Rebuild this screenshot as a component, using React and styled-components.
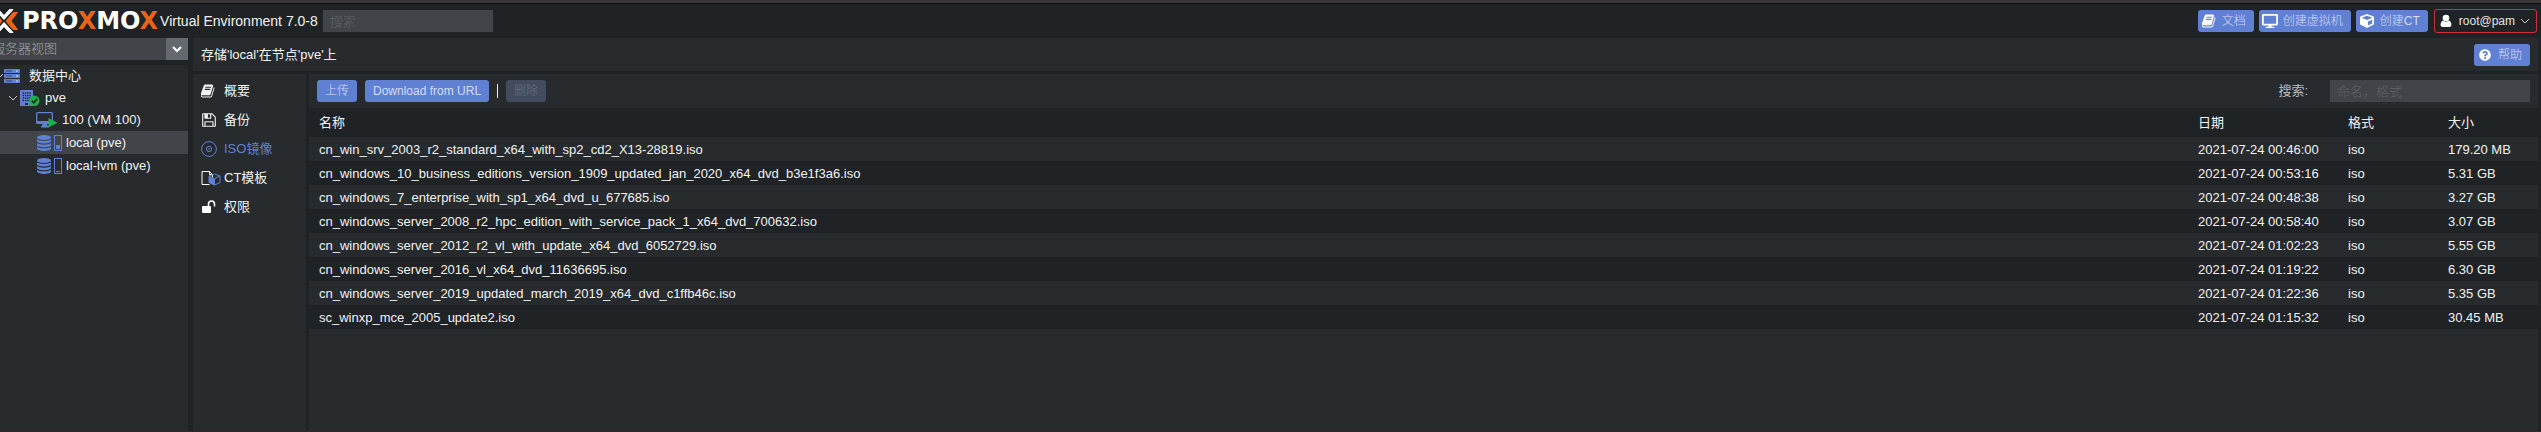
import React from "react";
import styled, { createGlobalStyle } from "styled-components";
import { FaDesktop, FaCube, FaQuestionCircle } from "react-icons/fa";

const color = {
  base: "#1f2326",
  panel: "#272b2e",
  field: "#414448",
  trigger: "#646970",
  accent: "#6081d3",
  text: "#f2f2f2",
  orange: "#e8641b",
  green: "#1cb14a",
};

const GlobalStyle = createGlobalStyle`
  * { box-sizing: border-box; }
  body {
    margin: 0;
    background: ${color.base};
    color: ${color.text};
    font: 13px/18px "Liberation Sans", "Noto Sans CJK SC", sans-serif;
  }
  button, input, select { font: inherit; font-weight: 300; }
`;

const Viewport = styled.div`
  min-height: 100vh;
  display: flex;
  overflow: hidden;
  border-top: 3px solid #3a3638;
  border-bottom: 1px solid #33272b;
`;

/* The workspace is scrolled 8px past the left edge of the window. */
const Shell = styled.div`
  flex: 1;
  min-width: 0;
  margin-left: -8px;
  display: flex;
  flex-direction: column;
  border-top: 1px solid #0c0e0f;
`;

const Header = styled.header`
  height: 34px;
  display: flex;
  align-items: center;
  padding: 0 4px 0 6px;
  white-space: nowrap;
`;

const Brand = styled.a`
  display: flex;
  align-items: center;
  gap: 3px;
  margin-right: 2px;
  color: #fff;
  text-decoration: none;
  font: bold 24px/26px "DejaVu Sans", sans-serif;
`;

const BrandX = styled.span`
  color: ${color.orange};
`;

const Version = styled.span`
  font-size: 14px;
  margin-right: 5px;
`;

const TextField = styled.input`
  width: ${(p) => p.$width}px;
  height: 22px;
  padding: 0 7px;
  border: 0;
  outline: 0;
  background: ${color.field};
  color: ${color.text};
  &::placeholder { color: #606367; opacity: 1; }
`;

const Spacer = styled.div`
  flex: 1;
`;

const Actions = styled.div`
  display: flex;
  align-items: center;
  gap: 5px;
`;

const Button = styled.button`
  height: 22px;
  display: flex;
  align-items: center;
  padding: 0 8px 0 ${(p) => (p.$icon ? 3 : 8)}px;
  border: 0;
  border-radius: 3px;
  background: ${color.accent};
  color: #d3dcf3;
  font-size: 12px;
  white-space: nowrap;
  &:disabled { background: #434c5f; color: #697080; }
`;

const ButtonIcon = styled.span`
  width: 16px;
  margin-right: 5px;
  display: grid;
  place-items: center;
  color: #fff;
`;

const UserButton = styled(Button)`
  height: 24px;
  margin-left: 1px;
  padding-right: 6px;
  border: 1px solid #cf2f3a;
  background: transparent;
  color: #e4e4e4;
`;

const UserName = styled.span`
  margin-right: 5px;
`;

const Body = styled.div`
  flex: 1;
  display: flex;
  gap: 5px;
  padding-right: 3px;
`;

const Sidebar = styled.aside`
  width: 196px;
  display: flex;
  flex-direction: column;
  gap: 5px;
`;

const ViewPicker = styled.label`
  display: flex;
  height: 22px;
  background: ${color.field};
`;

const ViewSelect = styled.select`
  flex: 1;
  appearance: none;
  border: 0;
  outline: 0;
  padding: 0;
  background: transparent;
  color: #a4a6a8;
`;

const PickerArrow = styled.span`
  width: 22px;
  display: grid;
  place-items: center;
  background: ${color.trigger};
`;

const Tree = styled.ul`
  flex: 1;
  margin: 0;
  padding: 0;
  list-style: none;
  background: ${color.panel};
`;

const TreeRow = styled.li`
  height: ${(p) => (p.$tall ? 23 : 22)}px;
  display: flex;
  align-items: center;
  gap: ${(p) => p.$gap}px;
  padding-left: ${(p) => p.$indent}px;
  background: ${(p) => (p.$selected ? color.field : "transparent")};
`;

const Main = styled.main`
  flex: 1;
  min-width: 0;
  display: flex;
  flex-direction: column;
  gap: 3px;
`;

const TitleBar = styled.div`
  height: 33px;
  display: flex;
  align-items: center;
  justify-content: space-between;
  padding: 0 8px;
  background: ${color.panel};
`;

const Title = styled.h1`
  margin: 0;
  font: inherit;
`;

const Content = styled.div`
  flex: 1;
  display: flex;
  gap: 3px;
`;

const Nav = styled.nav`
  width: 113px;
  padding-top: 2px;
  background: ${color.panel};
`;

const NavLink = styled.a`
  height: 29px;
  display: flex;
  align-items: center;
  padding-left: 8px;
  text-decoration: none;
  color: ${(p) => (p.$active ? color.accent : color.text)};
`;

const NavIcon = styled.span`
  width: 23px;
  display: flex;
`;

const GridPanel = styled.section`
  flex: 1;
  min-width: 0;
  background: ${color.panel};
`;

const Toolbar = styled.div`
  height: 34px;
  display: flex;
  align-items: center;
  gap: 8px;
  padding: 0 8px;
`;

const Divider = styled.span`
  width: 1px;
  height: 14px;
  background: #f2f2f2;
`;

const SearchLabel = styled.label`
  display: flex;
  align-items: center;
  gap: 22px;
  color: #b9bbbd;
`;

const Table = styled.table`
  width: 100%;
  table-layout: fixed;
  border-collapse: collapse;
  text-align: left;
`;

const HeadCell = styled.th`
  width: ${(p) => (p.$width ? `${p.$width}px` : "auto")};
  height: 29px;
  padding: 0 10px;
  background: ${color.base};
  font-weight: normal;
`;

const Row = styled.tr`
  &:nth-child(even) { background: ${color.base}; }
`;

const Cell = styled.td`
  height: 24px;
  padding: 2px 10px 0;
  white-space: nowrap;
`;

const LogoMark = () => (
  <svg width="21" height="26" viewBox="0 0 21 26" fill="none" aria-hidden="true">
    <path d="M-3 1.500h3.500L6 7.500l5.500-6H15L6 11.500zM-3 24.500h3.500L6 18.500l5.500 6H15L6 14.500z" fill="#fff" stroke="#fff" strokeLinejoin="round" />
    <path d="M19.500 4.500H15L8 13l7 8.500h4.500L13 13z" fill={color.orange} stroke={color.orange} strokeLinejoin="round" />
    <path d="M-7.500 4.500H-3L4 13l-7 8.500h-4.500L-1 13z" fill={color.orange} stroke={color.orange} strokeLinejoin="round" />
  </svg>
);

const Chevron = ({ size = 10, stroke = 1, tint = "#c8cacc" }) => (
  <svg width={size} height={size} viewBox="0 0 10 10" fill="none" stroke={tint} strokeWidth={stroke} aria-hidden="true">
    <path d="M1 3l4 4 4-4" />
  </svg>
);

const BookIcon = () => (
  <svg width="14" height="14" viewBox="64 64 1664 1664" fill="currentColor" aria-hidden="true">
    <path d="M1639 478q40 57 18 129l-275 906q-19 64-76.500 107.500t-122.500 43.500h-923q-77 0-148.500-53.500t-99.500-131.500q-24-67-2-127 0-4 3-27t4-37q1-8-3-21.500t-3-19.500q2-11 8-21t16.500-23.500 16.500-23.500q23-38 45-91.500t30-91.500q3-10 .5-30t-.5-28q3-11 17-28t17-23q21-36 42-92t25-90q1-9-2.500-32t.5-28q4-13 22-30.500t22-22.500q19-26 42.500-84.500t27.500-96.500q1-8-3-25.500t-2-26.500q2-8 9-18t18-23 17-21q8-12 16.500-30.500t15-35 16-36 19.500-32 26.500-23.500 36-11.500 47.500 5.500l-1 3q38-9 51-9h761q74 0 114 56t18 130l-274 906q-36 119-71.500 153.500t-128.500 34.500h-869q-27 0-38 15-11 16-1 43 24 70 144 70h923q29 0 56-15.500t35-41.500l300-987q7-22 5-57 38 15 59 43zm-1064 2q-4 13 2 22.500t20 9.500h608q13 0 25.500-9.500t16.500-22.500l21-64q4-13-2-22.500t-20-9.500h-608q-13 0-25.500 9.500t-16.500 22.500zm-83 256q-4 13 2 22.500t20 9.500h608q13 0 25.500-9.500t16.500-22.500l21-64q4-13-2-22.500t-20-9.500h-608q-13 0-25.500 9.500t-16.500 22.500z" />
  </svg>
);

const FloppyIcon = () => (
  <svg width="16" height="16" viewBox="0 0 1792 1792" fill="currentColor" aria-hidden="true">
    <path d="M512 1536h768v-384h-768v384zm896 0h128v-896q0-14-10-38.500t-20-34.500l-281-281q-10-10-34-20t-39-10v416q0 40-28 68t-68 28h-576q-40 0-68-28t-28-68v-416h-128v1280h128v-416q0-40 28-68t68-28h832q40 0 68 28t28 68v416zm-384-928v-320q0-13-9.500-22.500t-22.500-9.500h-192q-13 0-22.500 9.500t-9.500 22.500v320q0 13 9.500 22.500t22.500 9.500h192q13 0 22.500-9.500t9.500-22.500zm640 32v928q0 40-28 68t-68 28h-1344q-40 0-68-28t-28-68v-1344q0-40 28-68t68-28h928q40 0 88 20t76 48l280 280q28 28 48 76t20 88z" />
  </svg>
);

const DiscIcon = () => (
  <svg width="16" height="16" viewBox="0 0 16 16" fill="none" stroke="currentColor" aria-hidden="true">
    <circle cx="8" cy="8" r="7.4" />
    <circle cx="8" cy="8" r="2.600" />
    <circle cx="8" cy="8" r=".8" fill="currentColor" stroke="none" />
  </svg>
);

const TemplateIcon = () => (
  <svg width="20" height="16" viewBox="0 0 20 16" fill="none" aria-hidden="true">
    <path d="M8.500 14.500H1V1.500h7.500l3 3V7M8.500 1.500v3h3" stroke="#fff" />
    <path d="M8 6.500l5 2.200V15l-5-2.500z" fill={color.accent} />
    <path d="M8 6l5.500-2L19 6v6.500L13.500 15 8 12.500zM8 6l5.500 2.500L19 6M13.500 8.500V15" stroke={color.accent} />
  </svg>
);

const UnlockIcon = () => (
  <svg width="15" height="14" viewBox="0 0 15 14" fill="none" aria-hidden="true">
    <rect x="1" y="6" width="9" height="7" rx="1" fill="#fff" />
    <path d="M7.500 6.500V4a3 3 0 016 0v2.500" stroke="#fff" strokeWidth="1.600" />
  </svg>
);

const UserIcon = () => (
  <svg width="12" height="14" viewBox="0 0 12 14" fill="#fff" aria-hidden="true">
    <circle cx="6" cy="4" r="3.300" />
    <path d="M3 6.500c2 1.500 4 1.500 6 0 1.700.6 2.400 2.400 2.400 4.300 0 1.500-.9 2.200-2.200 2.200H2.800C1.500 13 .6 12.300.6 10.800.6 8.900 1.300 7.100 3 6.500z" />
  </svg>
);

const ServerIcon = () => (
  <svg width="16" height="14" viewBox="0 0 16 14" aria-hidden="true">
    {[0, 5, 10].map((y) => (
      <g key={y}>
        <rect y={y} width="16" height="4" rx=".6" fill={color.accent} />
        <path d={`M2 ${y + 2}h6`} stroke="#35456e" />
        <path d={`M12 ${y + 2}h2`} stroke="#dbe3f7" />
      </g>
    ))}
  </svg>
);

const NodeIcon = () => (
  <svg width="20" height="16" viewBox="0 0 20 16" aria-hidden="true">
    <path d="M0 0h13v16H0z" fill={color.accent} />
    <path d="M2.500 3h8.500M2.500 5.500h8.500M2.500 8h8.500M2.500 10.500h8.500" stroke={color.panel} strokeWidth="1.300" strokeDasharray="1.500 .8" />
    <path d="M5 13h3v2H5z" fill={color.panel} />
    <circle cx="14.300" cy="10.700" r="5.200" fill={color.green} />
    <path d="M11.800 10.800l2 2 3.300-4" fill="none" stroke={color.base} strokeWidth="1.600" />
  </svg>
);

const VmIcon = () => (
  <svg width="22" height="16" viewBox="0 0 22 16" aria-hidden="true">
    <path d="M1.500 0h14A1.500 1.500 0 0117 1.500v9a1.500 1.500 0 01-1.500 1.500H11l.6 2H13v1.500H5V14h.9l.6-2h-5A1.500 1.500 0 010 10.500v-9A1.500 1.500 0 011.500 0zM1.300 1.300V9h14.400V1.300z" fill={color.accent} fillRule="evenodd" />
    <path d="M12.500 6l9 4.700-9 4.900z" fill={color.green} />
  </svg>
);

const StorageIcon = ({ level }) => (
  <svg width="26" height="16" viewBox="0 0 26 16" aria-hidden="true">
    <g fill={color.accent}>
      <ellipse cx="7" cy="2.500" rx="7" ry="2.500" />
      <path d="M0 4.300c2 2.200 12 2.200 14 0v2.200c-1 2.600-13 2.600-14 0zM0 8c2 2.200 12 2.200 14 0v2.200c-1 2.600-13 2.600-14 0zM0 11.700c2 2.200 12 2.200 14 0v2c-1 2.900-13 2.900-14 0z" />
      <rect x="19" y={14 - level} width="4" height={level} />
    </g>
    <rect x="17.500" y=".5" width="7" height="15" fill="none" stroke={color.accent} />
  </svg>
);

const navItems = [
  { label: "概要", icon: <BookIcon /> },
  { label: "备份", icon: <FloppyIcon /> },
  { label: "ISO镜像", icon: <DiscIcon />, active: true },
  { label: "CT模板", icon: <TemplateIcon /> },
  { label: "权限", icon: <UnlockIcon /> },
];

const images = [
  ["cn_win_srv_2003_r2_standard_x64_with_sp2_cd2_X13-28819.iso", "2021-07-24 00:46:00", "iso", "179.20 MB"],
  ["cn_windows_10_business_editions_version_1909_updated_jan_2020_x64_dvd_b3e1f3a6.iso", "2021-07-24 00:53:16", "iso", "5.31 GB"],
  ["cn_windows_7_enterprise_with_sp1_x64_dvd_u_677685.iso", "2021-07-24 00:48:38", "iso", "3.27 GB"],
  ["cn_windows_server_2008_r2_hpc_edition_with_service_pack_1_x64_dvd_700632.iso", "2021-07-24 00:58:40", "iso", "3.07 GB"],
  ["cn_windows_server_2012_r2_vl_with_update_x64_dvd_6052729.iso", "2021-07-24 01:02:23", "iso", "5.55 GB"],
  ["cn_windows_server_2016_vl_x64_dvd_11636695.iso", "2021-07-24 01:19:22", "iso", "6.30 GB"],
  ["cn_windows_server_2019_updated_march_2019_x64_dvd_c1ffb46c.iso", "2021-07-24 01:22:36", "iso", "5.35 GB"],
  ["sc_winxp_mce_2005_update2.iso", "2021-07-24 01:15:32", "iso", "30.45 MB"],
];

export default function App() {
  return (
    <Viewport>
      <GlobalStyle />
      <Shell>
        <Header>
          <Brand href="#">
            <LogoMark />
            <span>
              PRO<BrandX>X</BrandX>MO<BrandX>X</BrandX>
            </span>
          </Brand>
          <Version>Virtual Environment 7.0-8</Version>
          <TextField $width={170} placeholder="搜索" aria-label="搜索" />
          <Spacer />
          <Actions>
            <Button $icon><ButtonIcon><BookIcon /></ButtonIcon>文档</Button>
            <Button $icon><ButtonIcon><FaDesktop size={16} /></ButtonIcon>创建虚拟机</Button>
            <Button $icon><ButtonIcon><FaCube size={14} /></ButtonIcon>创建CT</Button>
            <UserButton $icon>
              <ButtonIcon><UserIcon /></ButtonIcon>
              <UserName>root@pam</UserName>
              <Chevron />
            </UserButton>
          </Actions>
        </Header>
        <Body>
          <Sidebar>
            <ViewPicker>
              <ViewSelect aria-label="服务器视图">
                <option>服务器视图</option>
              </ViewSelect>
              <PickerArrow><Chevron stroke={2} tint="#fff" /></PickerArrow>
            </ViewPicker>
            <Tree>
              <TreeRow $indent={2} $gap={0}>
                <Chevron />
                <TreeRow as="span" $indent={0} $gap={9}><ServerIcon />数据中心</TreeRow>
              </TreeRow>
              <TreeRow $indent={16} $gap={2}>
                <Chevron />
                <TreeRow as="span" $indent={0} $gap={5}><NodeIcon />pve</TreeRow>
              </TreeRow>
              <TreeRow $indent={44} $gap={4}><VmIcon />100 (VM 100)</TreeRow>
              <TreeRow $indent={45} $gap={3} $tall $selected><StorageIcon level={4} />local (pve)</TreeRow>
              <TreeRow $indent={45} $gap={3} $tall><StorageIcon level={1} />local-lvm (pve)</TreeRow>
            </Tree>
          </Sidebar>
          <Main>
            <TitleBar>
              <Title>存储'local'在节点'pve'上</Title>
              <Button $icon><ButtonIcon><FaQuestionCircle size={12} /></ButtonIcon>帮助</Button>
            </TitleBar>
            <Content>
              <Nav>
                {navItems.map((item) => (
                  <NavLink key={item.label} href="#" $active={item.active}>
                    <NavIcon>{item.icon}</NavIcon>
                    {item.label}
                  </NavLink>
                ))}
              </Nav>
              <GridPanel>
                <Toolbar>
                  <Button>上传</Button>
                  <Button>Download from URL</Button>
                  <Divider />
                  <Button disabled>删除</Button>
                  <Spacer />
                  <SearchLabel>
                    搜索:
                    <TextField $width={200} placeholder="命名，格式" />
                  </SearchLabel>
                </Toolbar>
                <Table>
                  <thead>
                    <tr>
                      <HeadCell>名称</HeadCell>
                      <HeadCell $width={150}>日期</HeadCell>
                      <HeadCell $width={100}>格式</HeadCell>
                      <HeadCell $width={100}>大小</HeadCell>
                    </tr>
                  </thead>
                  <tbody>
                    {images.map((image) => (
                      <Row key={image[0]}>
                        {image.map((value) => (
                          <Cell key={value}>{value}</Cell>
                        ))}
                      </Row>
                    ))}
                  </tbody>
                </Table>
              </GridPanel>
            </Content>
          </Main>
        </Body>
      </Shell>
    </Viewport>
  );
}
